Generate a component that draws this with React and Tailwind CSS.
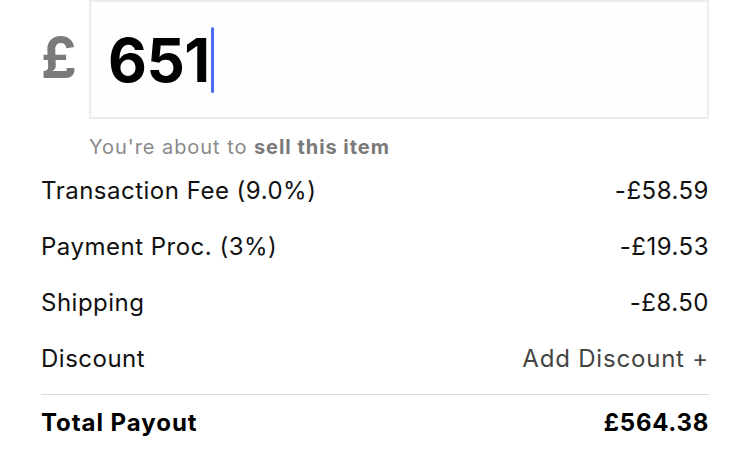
import React from 'react';

const rows = [
  { label: 'Transaction Fee (9.0%)', value: '-£58.59' },
  { label: 'Payment Proc. (3%)', value: '-£19.53' },
  { label: 'Shipping', value: '-£8.50' },
];

const App = () => {
  return (
    <div className="w-[750px] h-[467px] bg-white px-[41px] font-['Inter','Liberation_Sans',sans-serif] text-[#111]">
      {/* Price input */}
      <div className="flex items-stretch">
        <div className="w-[48px] flex items-center text-[56px] font-bold text-[#7a7a7a] leading-none pb-[4px]">£</div>
        <div className="flex-1 h-[119px] border-2 border-[#ececec] bg-[#fefefe] flex items-center pl-[17px]">
          <span className="text-[60px] font-bold text-black leading-none tracking-[-0.5px]">651</span>
          <span className="w-[3px] h-[66px] bg-[#4a6cf2] ml-[1px] rounded-sm"></span>
        </div>
      </div>

      <p className="ml-[48px] mt-[16px] text-[20px] leading-[24px] text-[#8a8a8a] tracking-[0.95px]">
        You're about to <span className="font-bold text-[#7a7a7a]">sell this item</span>
      </p>

      {/* Breakdown */}
      <div className="mt-[4px] text-[24px] tracking-[0.5px]">
        {rows.map((r) => (
          <div key={r.label} className="flex justify-between items-center h-[56px]">
            <span>{r.label}</span>
            <span>{r.value}</span>
          </div>
        ))}
        <div className="flex justify-between items-center h-[56px]">
          <span>Discount</span>
          <span className="text-[#444] tracking-[0.8px]">Add Discount +</span>
        </div>
        <div className="border-t border-[#dcdcdc] mt-[7px]"></div>
        <div className="flex justify-between items-center h-[56px] font-bold text-black tracking-[0.7px]">
          <span className="tracking-[0.95px]">Total Payout</span>
          <span>£564.38</span>
        </div>
      </div>
    </div>
  );
};

export default App;
